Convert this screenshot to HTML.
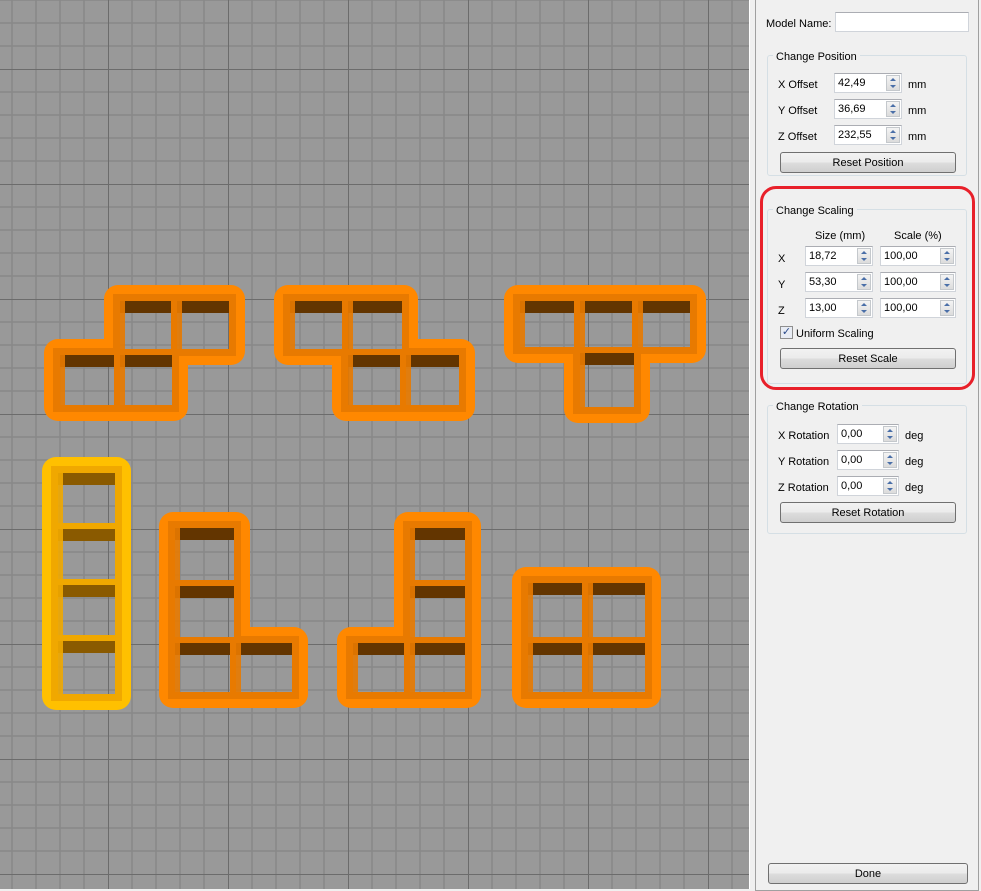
<!DOCTYPE html>
<html><head><meta charset="utf-8">
<style>
*{margin:0;padding:0;box-sizing:border-box}
body{width:981px;height:889px;overflow:hidden;background:#f0f0f0;font-family:"Liberation Sans",sans-serif;font-size:11px;color:#000;position:relative}
#vp{position:absolute;left:0;top:0;width:749px;height:889px}
.p{position:absolute}
.t{margin-top:2px}
.frame{position:absolute;left:755px;top:-2px;width:224px;height:893px;border:1px solid #a0a0a0}
.grp{position:absolute;border:1px solid #d5dfe5;border-radius:3px}
.gt{position:absolute;background:#f0f0f0;padding:0 3px;top:-7px;left:5px}
.inp{position:absolute;height:20px;background:#fff;border:1px solid #d0d4da;border-top-color:#abadb3;padding-left:3px;line-height:19px}
.sp{position:absolute;right:1px;top:1px;width:14px;height:16px;border:1px solid #c4c8cc;background:linear-gradient(#f4f4f4,#dcdcdc)}
.sp:before{content:"";position:absolute;left:3px;top:2px;border:3px solid transparent;border-bottom:3px solid #4a6fa8;border-top:0}
.sp:after{content:"";position:absolute;left:3px;top:9px;border:3px solid transparent;border-top:3px solid #4a6fa8;border-bottom:0}
.btn{position:absolute;height:21px;border:1px solid #707070;border-radius:3px;background:linear-gradient(#f2f2f2 0,#ebebeb 50%,#dddddd 51%,#cfcfcf 100%);text-align:center;line-height:20px}
</style></head><body>
<svg id="vp" width="749" height="889" xmlns="http://www.w3.org/2000/svg">
<defs>
<pattern id="g" x="108" y="69" width="120" height="115" patternUnits="userSpaceOnUse">
<rect width="120" height="115" fill="#999999"/>
<g stroke="#888" stroke-width="1.5">
<line x1="24" y1="0" x2="24" y2="115"/><line x1="48" y1="0" x2="48" y2="115"/><line x1="72" y1="0" x2="72" y2="115"/><line x1="96" y1="0" x2="96" y2="115"/>
<line x1="0" y1="23" x2="120" y2="23"/><line x1="0" y1="46" x2="120" y2="46"/><line x1="0" y1="69" x2="120" y2="69"/><line x1="0" y1="92" x2="120" y2="92"/>
</g>
<g stroke="#6c6c6c" stroke-width="2"><line x1="0" y1="0" x2="0" y2="115"/><line x1="0" y1="0" x2="120" y2="0"/></g>
</pattern>
</defs>
<rect width="749" height="889" fill="url(#g)"/>
<g id="pieces"></g>
</svg>
<script>
var P=[
 {c:"#ff8800",w:"#e87a00",d:"#633500",cells:[[117,298,174,352],[174,298,232,352],[57,352,117,408],[117,352,175,408]]},
 {c:"#ff8800",w:"#e87a00",d:"#633500",cells:[[287,298,345,352],[345,298,405,352],[345,352,403,408],[403,352,462,408]]},
 {c:"#ff8800",w:"#e87a00",d:"#633500",cells:[[517,298,577,350],[577,298,635,350],[635,298,693,350],[577,350,637,410]]},
 {c:"#ffc000",w:"#f0a800",d:"#8a5a00",cells:[[55,470,118,526],[55,526,118,582],[55,582,118,638],[55,638,118,697]]},
 {c:"#ff8800",w:"#e87a00",d:"#633500",cells:[[172,525,237,583],[172,583,237,640],[172,640,233,695],[233,640,295,695]]},
 {c:"#ff8800",w:"#e87a00",d:"#633500",cells:[[407,525,468,583],[407,583,468,640],[350,640,407,695],[407,640,468,695]]},
 {c:"#ff8800",w:"#e87a00",d:"#633500",cells:[[525,580,585,640],[585,580,648,640],[525,640,585,695],[585,640,648,695]]}
];
var s="";
P.forEach(function(p){
 p.cells.forEach(function(c){var e=13;s+='<rect x="'+(c[0]-e)+'" y="'+(c[1]-e)+'" width="'+(c[2]-c[0]+2*e)+'" height="'+(c[3]-c[1]+2*e)+'" rx="14" fill="'+p.c+'"/>';});
 p.cells.forEach(function(c){var e=4;s+='<rect x="'+(c[0]-e)+'" y="'+(c[1]-e)+'" width="'+(c[2]-c[0]+2*e)+'" height="'+(c[3]-c[1]+2*e)+'" fill="'+p.w+'"/>';});
 p.cells.forEach(function(c){var i=3,x=c[0]+i,y=c[1]+i,w=c[2]-c[0]-2*i,h=c[3]-c[1]-2*i;
  s+='<rect x="'+x+'" y="'+y+'" width="'+w+'" height="'+h+'" fill="url(#g)"/>';
  s+='<rect x="'+x+'" y="'+y+'" width="'+w+'" height="12" fill="'+p.d+'"/>';
  s+='<rect x="'+x+'" y="'+y+'" width="5" height="'+h+'" fill="'+p.w+'" opacity="0.9"/>';
 });
});
document.getElementById("pieces").innerHTML=s;
</script>
<div class="p" style="left:749px;top:0;width:1px;height:889px;background:#fff"></div>
<div class="frame"></div>

<div class="p t" style="left:766px;top:16px">Model Name:</div>
<div class="inp" style="left:835px;top:12px;width:134px"></div>

<div class="grp" style="left:767px;top:55px;width:200px;height:121px"><span class="gt t">Change Position</span></div>
<div class="p t" style="left:778px;top:77px">X Offset</div>
<div class="inp" style="left:834px;top:73px;width:68px">42,49<span class="sp"></span></div>
<div class="p t" style="left:908px;top:77px">mm</div>
<div class="p t" style="left:778px;top:103px">Y Offset</div>
<div class="inp" style="left:834px;top:99px;width:68px">36,69<span class="sp"></span></div>
<div class="p t" style="left:908px;top:103px">mm</div>
<div class="p t" style="left:778px;top:129px">Z Offset</div>
<div class="inp" style="left:834px;top:125px;width:68px">232,55<span class="sp"></span></div>
<div class="p t" style="left:908px;top:129px">mm</div>
<div class="btn" style="left:780px;top:152px;width:176px">Reset Position</div>

<div class="p" style="left:760px;top:186px;width:215px;height:204px;border:3px solid #e8202a;border-radius:16px"></div>
<div class="grp" style="left:767px;top:209px;width:200px;height:175px"><span class="gt t">Change Scaling</span></div>
<div class="p t" style="left:815px;top:228px">Size (mm)</div>
<div class="p t" style="left:894px;top:228px">Scale (%)</div>
<div class="p t" style="left:778px;top:251px">X</div>
<div class="inp" style="left:805px;top:246px;width:68px">18,72<span class="sp"></span></div>
<div class="inp" style="left:880px;top:246px;width:76px">100,00<span class="sp"></span></div>
<div class="p t" style="left:778px;top:277px">Y</div>
<div class="inp" style="left:805px;top:272px;width:68px">53,30<span class="sp"></span></div>
<div class="inp" style="left:880px;top:272px;width:76px">100,00<span class="sp"></span></div>
<div class="p t" style="left:778px;top:303px">Z</div>
<div class="inp" style="left:805px;top:298px;width:68px">13,00<span class="sp"></span></div>
<div class="inp" style="left:880px;top:298px;width:76px">100,00<span class="sp"></span></div>
<div class="p" style="left:780px;top:326px;width:13px;height:13px;border:1px solid #8f8f8f;background:#e8ecf4;font-size:11px;line-height:11px;text-align:center;color:#2a4a8a">✓</div>
<div class="p t" style="left:796px;top:326px">Uniform Scaling</div>
<div class="btn" style="left:780px;top:348px;width:176px">Reset Scale</div>

<div class="grp" style="left:767px;top:405px;width:200px;height:129px"><span class="gt t">Change Rotation</span></div>
<div class="p t" style="left:778px;top:428px">X Rotation</div>
<div class="inp" style="left:837px;top:424px;width:62px">0,00<span class="sp"></span></div>
<div class="p t" style="left:905px;top:428px">deg</div>
<div class="p t" style="left:778px;top:454px">Y Rotation</div>
<div class="inp" style="left:837px;top:450px;width:62px">0,00<span class="sp"></span></div>
<div class="p t" style="left:905px;top:454px">deg</div>
<div class="p t" style="left:778px;top:480px">Z Rotation</div>
<div class="inp" style="left:837px;top:476px;width:62px">0,00<span class="sp"></span></div>
<div class="p t" style="left:905px;top:480px">deg</div>
<div class="btn" style="left:780px;top:502px;width:176px">Reset Rotation</div>

<div class="btn" style="left:768px;top:863px;width:200px">Done</div>
</body></html>
